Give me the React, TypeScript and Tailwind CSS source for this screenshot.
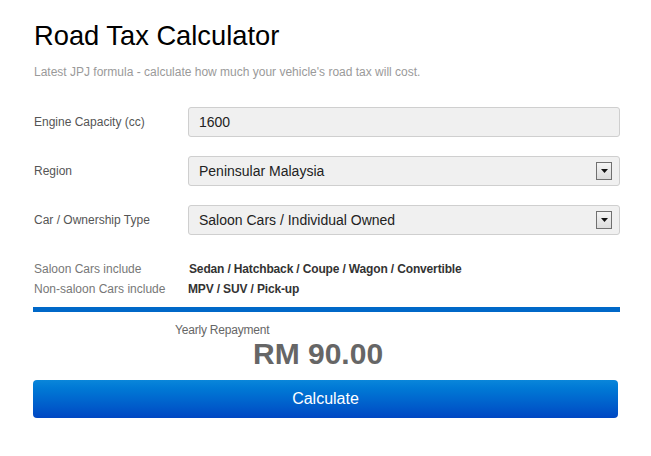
export default function App() {
  const font = { fontFamily: '"Liberation Sans", Arial, sans-serif' };

  return (
    <div className="min-h-[456px] w-[651px] bg-white" style={font}>
      <div className="w-[587px] ml-[33px] pt-[20px]">
        <h1 className="pl-px text-[27.3px] leading-[32px] text-black">Road Tax Calculator</h1>
        <p className="pl-px mt-[13px] text-[12px] leading-[14px] text-[#9a9a9a]">
          Latest JPJ formula - calculate how much your vehicle&apos;s road tax will cost.
        </p>

        <div className="mt-[28px] flex flex-col gap-[19px]">
          <Row label="Engine Capacity (cc)">
            <div className="h-[30px] flex items-center px-[10px] rounded-[3px] border border-[#cfcfcf] bg-[#f0f0f0] text-[14px] text-[#222]">
              1600
            </div>
          </Row>
          <Row label="Region">
            <SelectBox value="Peninsular Malaysia" />
          </Row>
          <Row label="Car / Ownership Type">
            <SelectBox value="Saloon Cars / Individual Owned" />
          </Row>
        </div>

        <div className="mt-[24px] pl-px text-[12px] leading-[20px]">
          <div className="flex">
            <span className="w-[155px] text-[#777]">Saloon Cars include</span>
            <span className="font-bold text-[#333] tracking-[-0.15px]">
              Sedan / Hatchback / Coupe / Wagon / Convertible
            </span>
          </div>
          <div className="flex">
            <span className="w-[154px] text-[#777]">Non-saloon Cars include</span>
            <span className="font-bold text-[#333] tracking-[-0.15px]">MPV / SUV / Pick-up</span>
          </div>
        </div>

        <div className="mt-[8px] h-[5px] bg-[#0068c8]" />

        <div className="mt-[11px] pl-[142px] text-[12px] leading-[14px] text-[#666] tracking-[-0.2px]">
          Yearly Repayment
        </div>
        <div className="mt-px pl-[220px] text-[30px] leading-[32px] font-bold text-[#666]">RM 90.00</div>

        <button className="mt-[10px] w-[585px] h-[38px] rounded-[4px] bg-gradient-to-b from-[#0a86da] to-[#0047c3] text-white text-[16px] flex items-center justify-center">
          Calculate
        </button>
      </div>
    </div>
  );
}

function Row({ label, children }: { label: string; children: React.ReactNode }) {
  return (
    <div className="flex items-center">
      <label className="w-[155px] pl-px text-[12px] text-[#555]">{label}</label>
      <div className="flex-1">{children}</div>
    </div>
  );
}

function SelectBox({ value }: { value: string }) {
  return (
    <div className="h-[30px] flex items-center justify-between pl-[10px] pr-[7px] rounded-[3px] border border-[#cfcfcf] bg-[#f0f0f0] text-[14px] text-[#222]">
      <span>{value}</span>
      <span className="w-[16px] h-[18px] flex items-center justify-center border border-[#707070] bg-gradient-to-b from-[#f4f4f4] to-[#dcdcdc]">
        <svg width="7" height="4" viewBox="0 0 7 4">
          <path d="M0 0h7L3.5 4z" fill="#111" />
        </svg>
      </span>
    </div>
  );
}
